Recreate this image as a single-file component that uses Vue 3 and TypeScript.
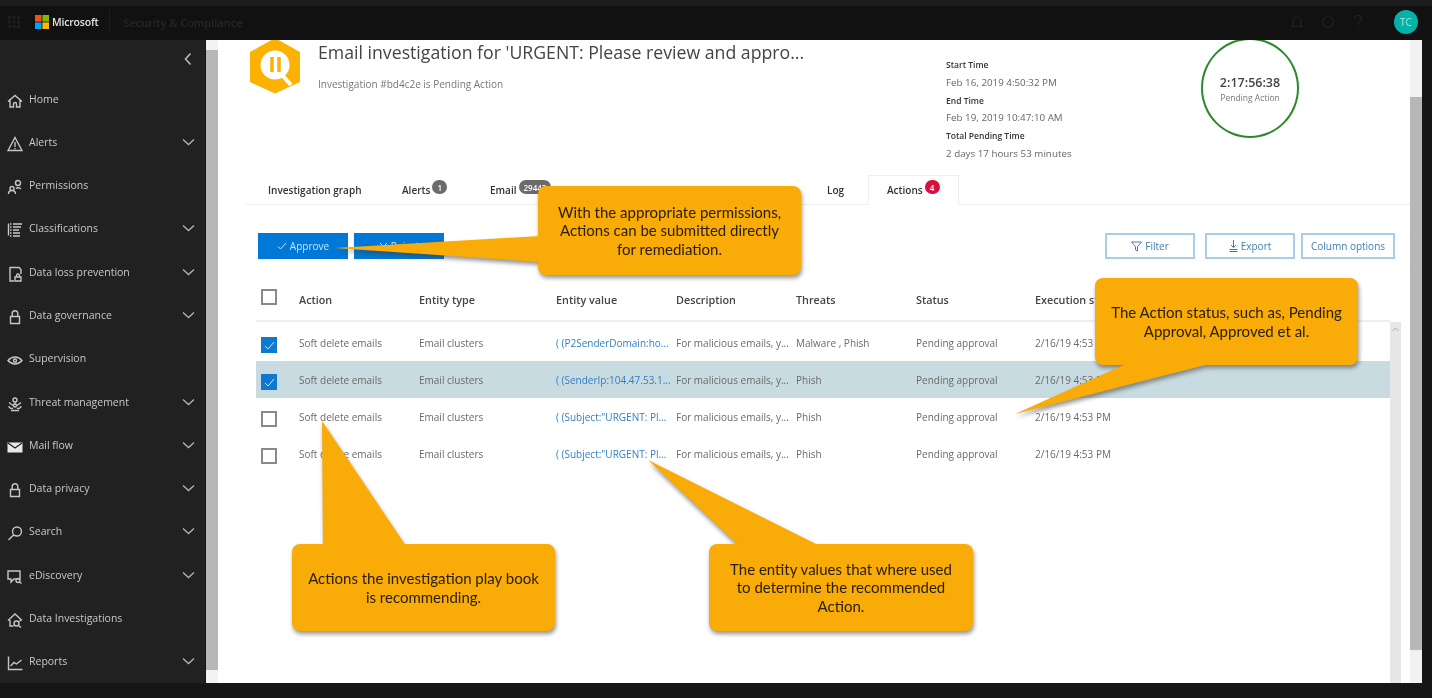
<script setup lang="ts">
interface NavItem {
  label: string;
  icon: string;
  chevron?: boolean;
  solid?: boolean;
}

interface Row {
  checked: boolean;
  value: string;
  threats: string;
  selected?: boolean;
}

interface Callout {
  lines: string[];
  x: number;
  y: number;
  w: number;
  h: number;
  tail: string;
}

const lock = 'M3.5 7.5h9v7h-9z M5.2 7.5V4.6a2.8 2.8 0 0 1 5.6 0v2.9';

const navItems: NavItem[] = [
  { label: 'Home', icon: 'M1 8.5 8 2.5l7 6 M3 7v7h3.5v-3a1.5 1.5 0 0 1 3 0v3H13V7' },
  { label: 'Alerts', icon: 'M8 1.5 15 14.5H1Z M8 6v5 M8 12v1.2', chevron: true },
  {
    label: 'Permissions',
    icon: 'M8.5 4a2.5 2.5 0 1 0 5 0a2.5 2.5 0 1 0-5 0 M9 9.5c1-1 3.500-1 5 .5 M3 9.500a2 2 0 1 0 4 0a2 2 0 1 0-4 0 M1.500 15c0-2 1.500-3.500 3.500-3.500s3.500 1.500 3.500 3.500',
  },
  {
    label: 'Classifications',
    icon: 'M1.500 1.500v12 M3 2h1.500 M3 5h1.500 M3 8h1.500 M3 11h1.500 M3 14h1.500 M6 2h9 M6 5h8 M6 8h6 M6 11h7 M6 14h7',
    chevron: true,
  },
  {
    label: 'Data loss prevention',
    icon: 'M7 15H3V1.500h9l2 2V8 M8 11h6v4H8z M9.500 11V9.500a1.500 1.500 0 0 1 3 0V11',
    chevron: true,
  },
  { label: 'Data governance', icon: lock, chevron: true },
  {
    label: 'Supervision',
    icon: 'M1 8.500s3-3.500 7-3.500 7 3.500 7 3.500-3 3.500-7 3.500-7-3.500-7-3.500Z M6.500 8.500a1.500 1.500 0 1 0 3 0a1.500 1.500 0 1 0-3 0',
  },
  {
    label: 'Threat management',
    icon: 'M6 4a2 2 0 1 0 4 0a2 2 0 1 0-4 0 M2 10a2.500 2.500 0 0 0 4 2 M14 10a2.500 2.500 0 0 1-4 2 M8 6v3 M2 6.500 6 9.500 M14 6.500 10 9.500 M6.500 9.500a1.500 1.500 0 1 0 3 0a1.500 1.500 0 1 0-3 0 M4 14.500h8',
    chevron: true,
  },
  { label: 'Mail flow', icon: 'M0.500 3.500h15v10H.500z', chevron: true, solid: true },
  { label: 'Data privacy', icon: lock, chevron: true },
  {
    label: 'Search',
    icon: 'M5.500 6.500a4.500 4.500 0 1 0 9 0a4.500 4.500 0 1 0-9 0 M6.800 9.800 1.500 15',
    chevron: true,
  },
  {
    label: 'eDiscovery',
    icon: 'M1 2h12v8H7l-3 3v-3H1z M9 11.500a2 2 0 1 0 4 0a2 2 0 1 0-4 0 M12.500 13l2 1.500',
    chevron: true,
  },
  {
    label: 'Data Investigations',
    icon: 'M1 8.500 8 2l7 6.500 M3 8v6h3.500 M13 8v1.500 M7 11.500a2.500 2.500 0 1 0 5 0a2.500 2.500 0 1 0-5 0 M11.500 13.500 14 15.500',
  },
  { label: 'Reports', icon: 'M1.500 1.500v13h14 M3.500 11l3.500-3.500 2.500 1.500 5-4', chevron: true },
];

const columns = ['Action', 'Entity type', 'Entity value', 'Description', 'Threats', 'Status', 'Execution start time'];

const rows: Row[] = [
  { checked: true, value: '( (P2SenderDomain:ho...', threats: 'Malware , Phish' },
  { checked: true, value: '( (SenderIp:104.47.53.1...', threats: 'Phish', selected: true },
  { checked: false, value: '( (Subject:"URGENT: Pl...', threats: 'Phish' },
  { checked: false, value: '( (Subject:"URGENT: Pl...', threats: 'Phish' },
];

const times: [string, string][] = [
  ['Start Time', 'Feb 16, 2019 4:50:32 PM'],
  ['End Time', 'Feb 19, 2019 10:47:10 AM'],
  ['Total Pending Time', '2 days 17 hours 53 minutes'],
];

const callouts: Callout[] = [
  {
    lines: ['With the appropriate permissions,', 'Actions can be submitted directly', 'for remediation.'],
    x: 538,
    y: 186,
    w: 263,
    h: 89,
    tail: '540,236 335,248 540,262',
  },
  {
    lines: ['The Action status, such as, Pending', 'Approval, Approved et al.'],
    x: 1095,
    y: 278,
    w: 263,
    h: 87,
    tail: '1126,364 1015,414 1209,364',
  },
  {
    lines: ['Actions the investigation play book', 'is recommending.'],
    x: 292,
    y: 544,
    w: 263,
    h: 87,
    tail: '323,546 322,421 406,546',
  },
  {
    lines: ['The entity values that where used', 'to determine the recommended', 'Action.'],
    x: 709,
    y: 544,
    w: 264,
    h: 87,
    tail: '739,546 648,460 820,546',
  },
];

const boxStyle = (c: Callout) => ({
  left: `${c.x}px`,
  top: `${c.y}px`,
  width: `${c.w}px`,
  height: `${c.h}px`,
});
</script>

<template>
  <div class="app">
    <header class="topbar">
      <div class="brand">
        <svg class="waffle" width="12" height="12" viewBox="0 0 12 12">
          <path d="M0 0h3v3H0zM4.500 0h3v3h-3zM9 0h3v3H9zM0 4.500h3v3H0zM4.500 4.500h3v3h-3zM9 4.500h3v3H9zM0 9h3v3H0zM4.500 9h3v3h-3zM9 9h3v3H9z" />
        </svg>
        <svg class="ms-logo" width="14" height="14" viewBox="0 0 14 14">
          <rect width="6.600" height="6.600" fill="#f25022" />
          <rect x="7.400" width="6.600" height="6.600" fill="#7fba00" />
          <rect y="7.400" width="6.600" height="6.600" fill="#00a4ef" />
          <rect x="7.400" y="7.400" width="6.600" height="6.600" fill="#ffb900" />
        </svg>
        <span class="ms-name">Microsoft</span>
        <span class="brand-sep"></span>
        <span class="product">Security &amp; Compliance</span>
      </div>
      <div class="top-actions">
        <svg width="12" height="14" viewBox="0 0 12 14"><path d="M2 10V6a4 4 0 0 1 8 0v4l1 1.500H1Z" /></svg>
        <svg width="14" height="14" viewBox="0 0 14 14"><circle cx="7" cy="7" r="5.500" /></svg>
        <svg width="10" height="14" viewBox="0 0 10 14"><path d="M1.500 4a3.500 3.500 0 1 1 5 3C5.500 7.600 5 8.500 5 10M5 11.500V13" /></svg>
        <span class="avatar">TC</span>
      </div>
    </header>

    <div class="body">
      <aside class="sidebar">
        <div class="collapse">
          <svg width="8" height="14" viewBox="0 0 8 14"><path d="M6.500 1.500 1.500 7l5 5.500" /></svg>
        </div>
        <nav class="nav">
          <a v-for="item in navItems" :key="item.label" class="nav-item">
            <svg class="nav-icon" :class="{ solid: item.solid }" width="16" height="16" viewBox="0 0 16 16">
              <path :d="item.icon" />
              <path v-if="item.solid" class="mail-flap" d="M1 4 8 9l7-5" />
            </svg>
            <span class="nav-label">{{ item.label }}</span>
            <svg v-if="item.chevron" class="chevron" width="13" height="8" viewBox="0 0 13 8"><path d="M1 1.500 6.500 6.500 12 1.500" /></svg>
          </a>
        </nav>
      </aside>

      <div class="page-scroll left"><span class="thumb"></span></div>

      <main class="main">
        <section class="summary">
          <svg class="logo" width="50" height="56" viewBox="0 0 50 56">
            <path d="M25 0 50 14V44L25 55.500 0 44V14Z" fill="#fdb100" />
            <circle cx="25" cy="27" r="14.500" fill="#fff" />
            <path d="M33 38l8 9" stroke="#fff" stroke-width="4" />
            <path d="M22 19v15M29 19v15" stroke="#fdb100" stroke-width="3.500" />
          </svg>
          <div class="heading">
            <h1>Email investigation for 'URGENT: Please review and appro...</h1>
            <p>Investigation #bd4c2e is Pending Action</p>
          </div>
          <dl class="times">
            <template v-for="t in times" :key="t[0]">
              <dt>{{ t[0] }}</dt>
              <dd>{{ t[1] }}</dd>
            </template>
          </dl>
          <div class="timer">
            <strong>2:17:56:38</strong>
            <span>Pending Action</span>
          </div>
        </section>

        <div class="tabs">
          <span class="tab first">Investigation graph</span>
          <span class="tab">Alerts<i class="badge grey">1</i></span>
          <span class="tab">Email<i class="badge grey wide">29443</i></span>
          <span class="tab">Log</span>
          <span class="tab active">Actions<i class="badge red">4</i></span>
        </div>

        <div class="toolbar">
          <div class="btn-group">
            <button class="btn primary">
              <svg width="10" height="8" viewBox="0 0 10 8"><path d="M1 4.500 3.500 7 9 1" /></svg>
              Approve
            </button>
            <button class="btn primary">
              <svg width="9" height="9" viewBox="0 0 9 9"><path d="M1 1l7 7M8 1 1 8" /></svg>
              Reject
            </button>
          </div>
          <div class="btn-group right">
            <button class="btn outline">
              <svg width="11" height="11" viewBox="0 0 11 11"><path d="M.5 1h10L6.500 5.500V10l-2-1V5.500Z" /></svg>
              Filter
            </button>
            <button class="btn outline">
              <svg width="9" height="12" viewBox="0 0 9 12"><path d="M4.500 0v7.500M2 5l2.500 2.500L7 5M.5 9.500h8M.5 11.500h8" /></svg>
              Export
            </button>
            <button class="btn outline narrow">Column options</button>
          </div>
        </div>

        <div class="table-wrap">
          <div class="table">
            <div class="grid-row head">
              <span class="check"></span>
              <span v-for="col in columns" :key="col">{{ col }}</span>
            </div>
            <div class="table-body">
              <div v-for="(row, i) in rows" :key="i" class="grid-row item" :class="{ selected: row.selected }">
                <span class="check" :class="{ on: row.checked }">
                  <svg v-if="row.checked" width="11" height="9" viewBox="0 0 11 9"><path d="M1 5l3 3 6-7" /></svg>
                </span>
                <span>Soft delete emails</span>
                <span>Email clusters</span>
                <span class="link">{{ row.value }}</span>
                <span>For malicious emails, y...</span>
                <span>{{ row.threats }}</span>
                <span>Pending approval</span>
                <span>2/16/19 4:53 PM</span>
              </div>
            </div>
          </div>
          <div class="table-scroll">
            <svg width="7" height="5" viewBox="0 0 7 5"><path d="M.5 4 3.500 1l3 3" /></svg>
          </div>
        </div>
      </main>

      <div class="page-scroll right"><span class="thumb"></span></div>
      <div class="edge"></div>
    </div>

    <footer class="footer"></footer>

    <svg class="callout-art" width="1432" height="698" viewBox="0 0 1432 698">
      <g v-for="c in callouts" :key="c.x" class="callout-shape">
        <rect :x="c.x" :y="c.y" :width="c.w" :height="c.h" rx="8" />
        <polygon :points="c.tail" />
      </g>
    </svg>
    <div v-for="c in callouts" :key="c.y + c.x" class="callout-text" :style="boxStyle(c)">
      <span v-for="line in c.lines" :key="line">{{ line }}</span>
    </div>
  </div>
</template>

<style>
html,
body {
  margin: 0;
  background: #151515;
}
</style>

<style scoped>
.app {
  position: relative;
  width: 1432px;
  height: 698px;
  display: flex;
  flex-direction: column;
  overflow: hidden;
  background: #151515;
  font-family: 'Open Sans', 'Liberation Sans', sans-serif;
  filter: blur(0.55px);
}

.topbar {
  height: 40px;
  flex: none;
  display: flex;
  align-items: center;
  justify-content: space-between;
  box-sizing: border-box;
  padding: 4px 14px 0 8px;
  background: linear-gradient(#1c1c1c 0 6px, #111 6px);
}

.brand {
  display: flex;
  align-items: center;
}

.waffle {
  fill: #1e1e1e;
  margin-right: 15px;
}

.ms-logo {
  margin-right: 3px;
}

.ms-name {
  color: #e2e2e2;
  font-size: 10.500px;
  font-weight: 600;
  letter-spacing: -0.2px;
}

.brand-sep {
  width: 1px;
  height: 24px;
  background: #1e1e1e;
  margin: 0 13px 0 11px;
}

.product {
  color: #262626;
  font-size: 11px;
  font-weight: 600;
}

.top-actions {
  display: flex;
  align-items: center;
  gap: 18px;
}

.top-actions svg {
  fill: none;
  stroke: #222;
  stroke-width: 1.200;
}

.avatar {
  width: 24px;
  height: 24px;
  margin-left: 13px;
  border-radius: 50%;
  background: #03b3a8;
  color: #a9e6e0;
  font-size: 10px;
  display: flex;
  align-items: center;
  justify-content: center;
}

.body {
  flex: 1;
  min-height: 0;
  display: flex;
}

.sidebar {
  width: 205px;
  flex: none;
  display: flex;
  flex-direction: column;
  background: #212121;
}

.collapse {
  height: 37px;
  flex: none;
  display: flex;
  align-items: center;
  justify-content: flex-end;
  padding-right: 13px;
  padding-top: 1px;
  box-sizing: border-box;
}

.collapse svg {
  fill: none;
  stroke: #bdbdbd;
  stroke-width: 1.500;
}

.nav {
  flex: 1;
  display: grid;
  grid-auto-rows: 1fr;
}

.nav-item {
  display: flex;
  align-items: center;
  padding: 0 10px 0 7px;
  color: #c9c9c9;
  font-size: 10.500px;
}

.nav-icon {
  flex: none;
  margin-top: 4px;
  fill: none;
  stroke: #c6c6c6;
  stroke-width: 1.400;
}

.nav-icon.solid {
  fill: #e8e8e8;
  stroke: none;
}

.mail-flap {
  fill: none;
  stroke: #212121;
  stroke-width: 1.200;
}

.nav-label {
  margin-left: 6px;
  flex: 1;
}

.chevron {
  fill: none;
  stroke: #b4b4b4;
  stroke-width: 1.300;
}

.page-scroll {
  width: 12px;
  flex: none;
  background: #f3f3f3;
  display: flex;
  box-sizing: border-box;
}

.page-scroll.left {
  margin-left: 1px;
  padding: 10px 0 13px;
}

.page-scroll.right {
  padding: 57px 0 33px;
  background: #f1f1f1;
}

.thumb {
  flex: 1;
  background: #b7b7b7;
}

.edge {
  width: 10px;
  flex: none;
  background: #151515;
}

.main {
  flex: 1;
  min-width: 0;
  display: flex;
  flex-direction: column;
  box-sizing: border-box;
  padding-left: 28px;
  background: #fff;
  overflow: hidden;
}

.summary {
  height: 135px;
  flex: none;
  display: flex;
  align-items: flex-start;
  padding-left: 4px;
}

.logo {
  flex: none;
  margin-top: -2px;
}

.heading {
  width: 628px;
  flex: none;
  margin-left: 18px;
}

.heading h1 {
  margin: 0;
  color: #444;
  font-size: 17.700px;
  font-weight: 400;
  line-height: 24px;
  white-space: nowrap;
}

.heading p {
  margin: 14px 0 0;
  color: #777;
  font-size: 10px;
  line-height: 12px;
}

.times {
  width: 255px;
  flex: none;
  margin: 16px 0 0;
  font-size: 9.800px;
  line-height: 17.800px;
}

.times dt {
  color: #333;
  font-weight: 600;
  font-size: 8.500px;
}

.times dd {
  margin: 0;
  color: #666;
}

.timer {
  width: 98px;
  height: 100px;
  flex: none;
  margin-top: -2px;
  box-sizing: border-box;
  border: 2.500px solid #2c8a2c;
  border-radius: 50%;
  display: flex;
  flex-direction: column;
  align-items: center;
  justify-content: center;
  padding-top: 2px;
}

.timer strong {
  color: #444;
  font-size: 12.500px;
  font-weight: 600;
  line-height: 16px;
}

.timer span {
  color: #777;
  font-size: 8.500px;
  line-height: 13px;
}

.tabs {
  height: 30px;
  flex: none;
  display: grid;
  grid-template-columns: 156px 88px 337px 41px 91px;
  box-sizing: border-box;
  border-bottom: 1px solid #eee;
}

.tab {
  display: flex;
  align-items: center;
  height: 30px;
  box-sizing: border-box;
  color: #333;
  font-size: 10px;
  font-weight: 600;
  white-space: nowrap;
}

.tab.first {
  padding-left: 22px;
}

.tab.active {
  padding-left: 18px;
  border: 1px solid #eee;
  border-bottom-color: #fff;
}

.badge {
  display: inline-flex;
  align-items: center;
  justify-content: center;
  min-width: 15px;
  height: 14px;
  margin: -6px 0 0 2px;
  border-radius: 7px;
  color: #fff;
  font-size: 8px;
  font-style: normal;
}

.badge.grey {
  background: #6b6b6b;
}

.badge.wide {
  padding: 0 5px;
}

.badge.red {
  background: #d9103b;
}

.toolbar {
  flex: none;
  display: flex;
  justify-content: space-between;
  align-items: flex-start;
  padding: 28px 15px 0 12px;
}

.btn-group {
  display: flex;
  gap: 6px;
}

.btn-group.right {
  gap: 10px;
}

.btn-group.right .narrow {
  margin-left: -4px;
}

.btn {
  height: 26px;
  width: 90px;
  padding: 0;
  box-sizing: border-box;
  display: flex;
  align-items: center;
  justify-content: center;
  gap: 3px;
  font-family: inherit;
  font-size: 10px;
}

.btn svg {
  fill: none;
  stroke: currentColor;
}

.btn.primary {
  border: 0;
  background: #0078d7;
  color: #cfe6f8;
}

.btn.outline {
  border: 2px solid #a9cdec;
  background: #fff;
  color: #3f7fb5;
}

.btn.narrow {
  width: 94px;
}

.table-wrap {
  flex: 1;
  min-height: 0;
  display: flex;
  margin: 22px 9px 0 10px;
}

.table {
  flex: 1;
  min-width: 0;
}

.grid-row {
  display: grid;
  grid-template-columns: 43px 120px 137px 120px 120px 120px 119px 1fr;
  align-items: center;
  white-space: nowrap;
}

.grid-row > span:not(.check) {
  overflow: hidden;
}

.head {
  height: 41px;
  box-sizing: border-box;
  border-bottom: 2px solid #eee;
  padding-bottom: 2px;
  color: #444;
  font-size: 10.800px;
  font-weight: 600;
}

.head .check {
  margin-top: -5px;
}

.table-body {
  padding-top: 2px;
}

.item {
  height: 37px;
  color: #6a6a6a;
  font-size: 10px;
}

.item.selected {
  background: #c8dbe0;
}

.link {
  color: #2f7fc4;
}

.check {
  width: 16px;
  height: 16px;
  margin: 5px 0 0 5px;
  box-sizing: border-box;
  border: 2px solid #8a8a8a;
  background: #fff;
  display: flex;
  align-items: center;
  justify-content: center;
}

.check.on {
  border: 0;
  background: #0f78d0;
}

.check svg {
  fill: none;
  stroke: #cfe6f8;
  stroke-width: 1;
}

.table-scroll {
  width: 11px;
  flex: none;
  margin-top: 41px;
  background: #e7e7e7;
  display: flex;
  justify-content: center;
  padding-top: 5px;
  box-sizing: border-box;
}

.table-scroll svg {
  fill: none;
  stroke: #aaa;
}

.footer {
  height: 15px;
  flex: none;
  background: #161616;
}

/* the yellow notes sit on top of the page */
.callout-art {
  position: absolute;
  left: 0;
  top: 0;
  pointer-events: none;
}

.callout-shape {
  fill: #f9ab08;
  filter: drop-shadow(1px 3px 2px rgba(60, 60, 60, 0.55));
}

.callout-text {
  position: absolute;
  display: flex;
  flex-direction: column;
  align-items: center;
  justify-content: center;
  color: #2b2000;
  font-family: Lato, 'Open Sans', sans-serif;
  font-size: 15px;
  line-height: 18.600px;
  white-space: nowrap;
}
</style>
